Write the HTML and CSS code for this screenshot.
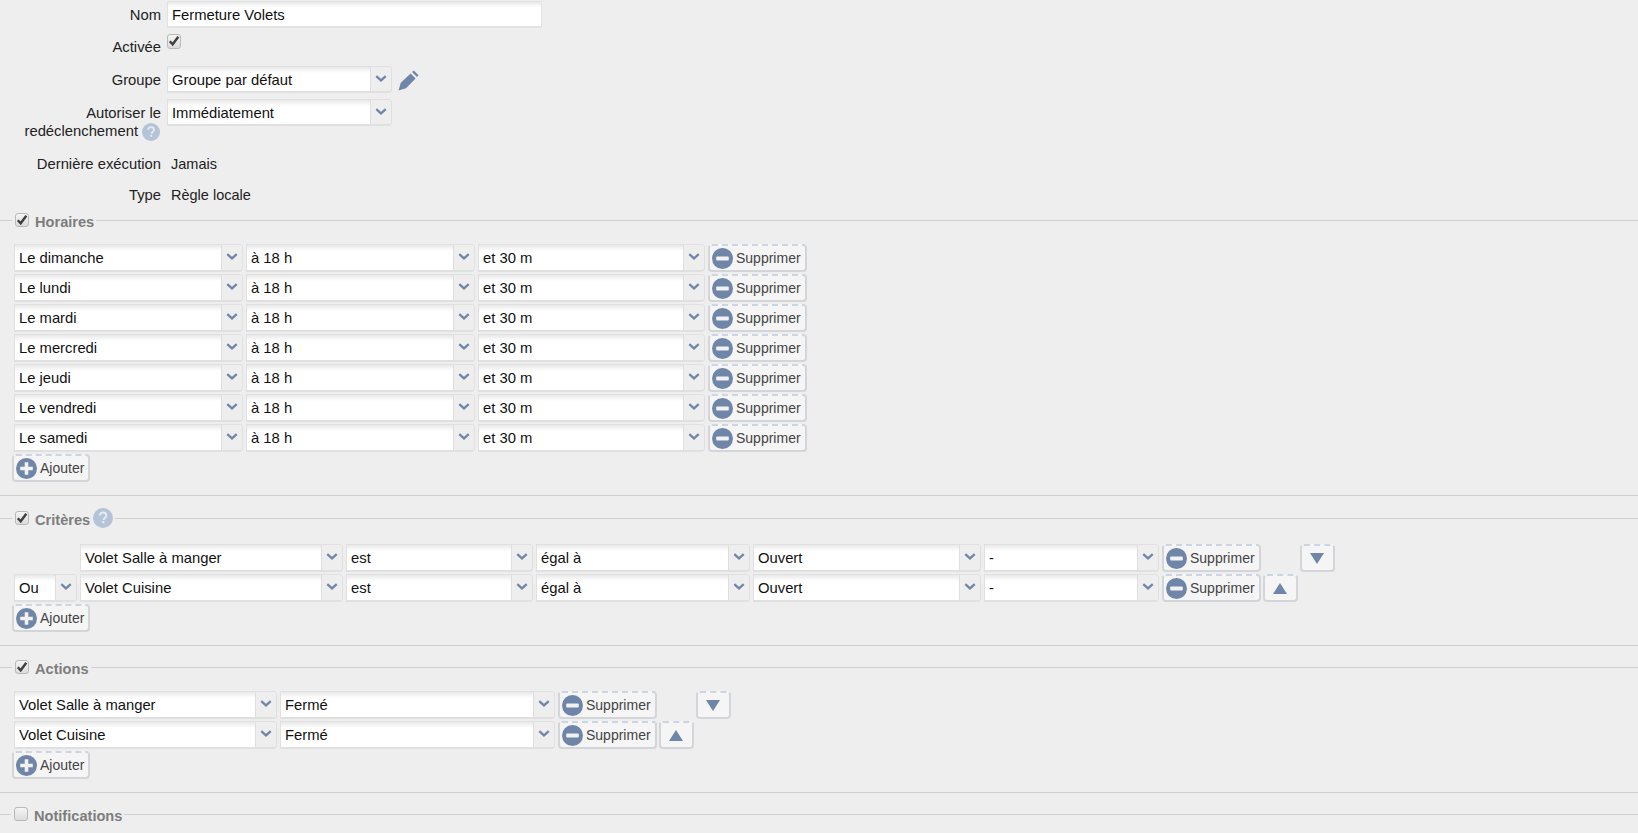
FILE: index.html
```html
<!DOCTYPE html>
<html lang="fr">
<head>
<meta charset="utf-8">
<title>Fermeture Volets</title>
<link rel="stylesheet" href="styles.css">
</head>
<body>
<svg class="defs" width="0" height="0" aria-hidden="true">
  <defs>
    <symbol id="chev" viewBox="0 0 14 8"><path d="M1.5 1.2 7 6.2 12.500 1.200" fill="none" stroke="currentColor" stroke-width="2.6"/></symbol>
    <symbol id="minus" viewBox="0 0 20 20"><circle cx="10" cy="10" r="10" fill="currentColor"/><rect x="4" y="8" width="12" height="4" rx="1" fill="#f2f2f2"/></symbol>
    <symbol id="plus" viewBox="0 0 20 20"><circle cx="10" cy="10" r="10" fill="currentColor"/><path d="M8.300 4h3.400v4.300H16v3.400h-4.300V16H8.300v-4.300H4V8.300h4.300z" fill="#f2f2f2"/></symbol>
    <symbol id="tick" viewBox="0 0 14 14"><path d="M2.800 7.200 5.700 10.300 11.300 2.800" fill="none" stroke="#3f3f3f" stroke-width="2.400"/></symbol>
    <symbol id="help" viewBox="0 0 20 20"><circle cx="10" cy="10" r="10" fill="currentColor"/><path d="M6.800 7.500C7 5.400 8.400 4.600 10.100 4.600c1.900 0 3.200 1.100 3.200 2.800 0 2.500-2.700 2.500-2.700 4.500" fill="none" stroke="#e6eaf0" stroke-width="2"/><rect x="9.100" y="13" width="2.300" height="2.300" fill="#e6eaf0"/></symbol>
    <symbol id="pencil" viewBox="0 0 21 21"><path d="M0.500 20.500 2.800 12.800 12.600 3.400 17.600 8.400 8 18.200Z M14 2 15.800 0.500 20.500 5.200 19 7Z" fill="currentColor"/></symbol>
    <symbol id="up" viewBox="0 0 14 11"><path d="M7 0 14 11H0Z" fill="currentColor"/></symbol>
    <symbol id="down" viewBox="0 0 14 11"><path d="M0 0H14L7 11Z" fill="currentColor"/></symbol>
  </defs>
</svg>

<form class="page">
  <div class="form-row row-nom">
    <label class="lbl lbl-tall">Nom</label>
    <input class="text-input" type="text" value="Fermeture Volets">
  </div>
  <div class="form-row row-active">
    <label class="lbl lbl-active">Activée</label>
    <span class="check check-form"><svg class="tick"><use href="#tick"/></svg></span>
  </div>
  <div class="form-row row-groupe">
    <label class="lbl lbl-tall">Groupe</label>
    <div class="select w-form"><span class="val">Groupe par défaut</span><span class="arrow"><svg class="chev"><use href="#chev"/></svg></span></div>
    <svg class="pencil"><use href="#pencil"/></svg>
  </div>
  <div class="form-row row-auto">
    <label class="lbl lbl-two">Autoriser le<br><span class="lbl-line">redéclenchement <svg class="help help-lbl"><use href="#help"/></svg></span></label>
    <div class="select w-form"><span class="val">Immédiatement</span><span class="arrow"><svg class="chev"><use href="#chev"/></svg></span></div>
  </div>
  <div class="form-row row-last">
    <label class="lbl">Dernière exécution</label>
    <span class="static">Jamais</span>
  </div>
  <div class="form-row row-type">
    <label class="lbl">Type</label>
    <span class="static">Règle locale</span>
  </div>

  <fieldset class="group group-first">
    <legend class="legend"><span class="check"><svg class="tick"><use href="#tick"/></svg></span><span class="legend-text">Horaires</span></legend>
    <div class="rows">
      <div class="row"><div class="select w-day"><span class="val">Le dimanche</span><span class="arrow"><svg class="chev"><use href="#chev"/></svg></span></div><div class="select w-day"><span class="val">à 18 h</span><span class="arrow"><svg class="chev"><use href="#chev"/></svg></span></div><div class="select w-min"><span class="val">et 30 m</span><span class="arrow"><svg class="chev"><use href="#chev"/></svg></span></div><button type="button" class="btn"><svg class="ico"><use href="#minus"/></svg>Supprimer</button></div>
      <div class="row"><div class="select w-day"><span class="val">Le lundi</span><span class="arrow"><svg class="chev"><use href="#chev"/></svg></span></div><div class="select w-day"><span class="val">à 18 h</span><span class="arrow"><svg class="chev"><use href="#chev"/></svg></span></div><div class="select w-min"><span class="val">et 30 m</span><span class="arrow"><svg class="chev"><use href="#chev"/></svg></span></div><button type="button" class="btn"><svg class="ico"><use href="#minus"/></svg>Supprimer</button></div>
      <div class="row"><div class="select w-day"><span class="val">Le mardi</span><span class="arrow"><svg class="chev"><use href="#chev"/></svg></span></div><div class="select w-day"><span class="val">à 18 h</span><span class="arrow"><svg class="chev"><use href="#chev"/></svg></span></div><div class="select w-min"><span class="val">et 30 m</span><span class="arrow"><svg class="chev"><use href="#chev"/></svg></span></div><button type="button" class="btn"><svg class="ico"><use href="#minus"/></svg>Supprimer</button></div>
      <div class="row"><div class="select w-day"><span class="val">Le mercredi</span><span class="arrow"><svg class="chev"><use href="#chev"/></svg></span></div><div class="select w-day"><span class="val">à 18 h</span><span class="arrow"><svg class="chev"><use href="#chev"/></svg></span></div><div class="select w-min"><span class="val">et 30 m</span><span class="arrow"><svg class="chev"><use href="#chev"/></svg></span></div><button type="button" class="btn"><svg class="ico"><use href="#minus"/></svg>Supprimer</button></div>
      <div class="row"><div class="select w-day"><span class="val">Le jeudi</span><span class="arrow"><svg class="chev"><use href="#chev"/></svg></span></div><div class="select w-day"><span class="val">à 18 h</span><span class="arrow"><svg class="chev"><use href="#chev"/></svg></span></div><div class="select w-min"><span class="val">et 30 m</span><span class="arrow"><svg class="chev"><use href="#chev"/></svg></span></div><button type="button" class="btn"><svg class="ico"><use href="#minus"/></svg>Supprimer</button></div>
      <div class="row"><div class="select w-day"><span class="val">Le vendredi</span><span class="arrow"><svg class="chev"><use href="#chev"/></svg></span></div><div class="select w-day"><span class="val">à 18 h</span><span class="arrow"><svg class="chev"><use href="#chev"/></svg></span></div><div class="select w-min"><span class="val">et 30 m</span><span class="arrow"><svg class="chev"><use href="#chev"/></svg></span></div><button type="button" class="btn"><svg class="ico"><use href="#minus"/></svg>Supprimer</button></div>
      <div class="row"><div class="select w-day"><span class="val">Le samedi</span><span class="arrow"><svg class="chev"><use href="#chev"/></svg></span></div><div class="select w-day"><span class="val">à 18 h</span><span class="arrow"><svg class="chev"><use href="#chev"/></svg></span></div><div class="select w-min"><span class="val">et 30 m</span><span class="arrow"><svg class="chev"><use href="#chev"/></svg></span></div><button type="button" class="btn"><svg class="ico"><use href="#minus"/></svg>Supprimer</button></div>
      <button type="button" class="btn btn-add"><svg class="ico"><use href="#plus"/></svg>Ajouter</button>
    </div>
  </fieldset>

  <fieldset class="group group-tall">
    <legend class="legend"><span class="check"><svg class="tick"><use href="#tick"/></svg></span><span class="legend-text">Critères</span><svg class="help help-legend"><use href="#help"/></svg></legend>
    <div class="rows">
      <div class="row">
        <div class="ou-spacer"></div>
        <div class="select w-c1"><span class="val">Volet Salle à manger</span><span class="arrow"><svg class="chev"><use href="#chev"/></svg></span></div>
        <div class="select w-c2"><span class="val">est</span><span class="arrow"><svg class="chev"><use href="#chev"/></svg></span></div>
        <div class="select w-c3"><span class="val">égal à</span><span class="arrow"><svg class="chev"><use href="#chev"/></svg></span></div>
        <div class="select w-c4"><span class="val">Ouvert</span><span class="arrow"><svg class="chev"><use href="#chev"/></svg></span></div>
        <div class="select w-c5"><span class="val">-</span><span class="arrow"><svg class="chev"><use href="#chev"/></svg></span></div>
        <button type="button" class="btn"><svg class="ico"><use href="#minus"/></svg>Supprimer</button>
        <div class="move-spacer"></div>
        <button type="button" class="btn btn-move"><svg class="tri"><use href="#down"/></svg></button>
      </div>
      <div class="row">
        <div class="select w-ou"><span class="val">Ou</span><span class="arrow"><svg class="chev"><use href="#chev"/></svg></span></div>
        <div class="select w-c1"><span class="val">Volet Cuisine</span><span class="arrow"><svg class="chev"><use href="#chev"/></svg></span></div>
        <div class="select w-c2"><span class="val">est</span><span class="arrow"><svg class="chev"><use href="#chev"/></svg></span></div>
        <div class="select w-c3"><span class="val">égal à</span><span class="arrow"><svg class="chev"><use href="#chev"/></svg></span></div>
        <div class="select w-c4"><span class="val">Ouvert</span><span class="arrow"><svg class="chev"><use href="#chev"/></svg></span></div>
        <div class="select w-c5"><span class="val">-</span><span class="arrow"><svg class="chev"><use href="#chev"/></svg></span></div>
        <button type="button" class="btn"><svg class="ico"><use href="#minus"/></svg>Supprimer</button>
        <button type="button" class="btn btn-move"><svg class="tri"><use href="#up"/></svg></button>
      </div>
      <button type="button" class="btn btn-add"><svg class="ico"><use href="#plus"/></svg>Ajouter</button>
    </div>
  </fieldset>

  <fieldset class="group">
    <legend class="legend"><span class="check"><svg class="tick"><use href="#tick"/></svg></span><span class="legend-text">Actions</span></legend>
    <div class="rows">
      <div class="row">
        <div class="select w-a1"><span class="val">Volet Salle à manger</span><span class="arrow"><svg class="chev"><use href="#chev"/></svg></span></div>
        <div class="select w-a2"><span class="val">Fermé</span><span class="arrow"><svg class="chev"><use href="#chev"/></svg></span></div>
        <button type="button" class="btn"><svg class="ico"><use href="#minus"/></svg>Supprimer</button>
        <div class="move-spacer"></div>
        <button type="button" class="btn btn-move"><svg class="tri"><use href="#down"/></svg></button>
      </div>
      <div class="row">
        <div class="select w-a1"><span class="val">Volet Cuisine</span><span class="arrow"><svg class="chev"><use href="#chev"/></svg></span></div>
        <div class="select w-a2"><span class="val">Fermé</span><span class="arrow"><svg class="chev"><use href="#chev"/></svg></span></div>
        <button type="button" class="btn"><svg class="ico"><use href="#minus"/></svg>Supprimer</button>
        <button type="button" class="btn btn-move"><svg class="tri"><use href="#up"/></svg></button>
      </div>
      <button type="button" class="btn btn-add"><svg class="ico"><use href="#plus"/></svg>Ajouter</button>
    </div>
  </fieldset>

  <fieldset class="group group-closed">
    <legend class="legend"><span class="check"></span><span class="legend-text">Notifications</span></legend>
  </fieldset>
</form>
</body>
</html>
```

FILE: styles.css
```css
* { box-sizing: border-box; }
html, body { margin: 0; height: 833px; overflow: hidden; }
body {
  background: #eeeeee;
  color: #1c1c1c;
  font: 14.8px/18px "Liberation Sans", Arial, sans-serif;
}
.defs { position: absolute; }
.page { display: block; }

.form-row { display: flex; align-items: flex-start; gap: 6px; }
.row-nom { margin-top: 1px; height: 27px; }
.row-active { margin-top: 6px; height: 26px; }
.row-groupe { margin-top: 6px; height: 27px; }
.row-auto { margin-top: 6px; height: 47px; }
.row-last { margin-top: 9px; height: 18px; }
.row-type { margin-top: 13px; height: 18px; }

.lbl { width: 161px; flex: none; text-align: right; color: #222; }
.lbl-tall { line-height: 28px; }
.lbl-active { padding-top: 4px; }
.lbl-two { padding-top: 5px; }
.lbl-line { display: inline-flex; align-items: flex-start; gap: 4px; padding-right: 1px; }
.static { margin-left: 4px; color: #222; font-size: 14.5px; }

.text-input {
  width: 375px; height: 27px;
  padding: 2px 4px 0;
  border: 1px solid #e2e2e2;
  border-bottom-width: 2px;
  background: linear-gradient(#e8e8e8, #ffffff 5px);
  font: inherit; color: #111;
  outline: none;
}

.check {
  display: inline-block; flex: none;
  width: 14px; height: 14px;
  border: 1px solid #b9b9b9; border-radius: 3px;
  background: linear-gradient(#f4f4f4, #dcdcdc);
}
.check-form { width: 14px; height: 15px; }
.tick { display: block; width: 14px; height: 14px; margin: -1px; }

.select {
  display: flex; flex: none; height: 28px;
  border: 1px solid #e0e0e0;
  border-bottom-width: 2px;
  border-radius: 0 4px 4px 0;
  overflow: hidden;
}
.row-groupe .select, .row-auto .select { height: 27px; }
.val {
  flex: 1 1 auto; min-width: 0;
  padding: 2px 4px 0 4px;
  line-height: 22px;
  background: linear-gradient(#e8e8e8, #ffffff 6px);
  color: #111;
  white-space: nowrap;
}
.arrow {
  flex: none; width: 21px;
  display: flex; align-items: flex-start; justify-content: center;
  padding-top: 8px;
  border-left: 1px solid #dedede;
  background: #eeeeee;
  color: #6f86a8;
}
.chev { display: block; width: 12px; height: 7px; }

.w-form { width: 225px; }
.w-day { width: 229px; }
.w-min { width: 227px; }
.w-ou { width: 63px; }
.w-c1 { width: 263px; }
.w-c2 { width: 187px; }
.w-c3 { width: 214px; }
.w-c4 { width: 228px; }
.w-c5 { width: 175px; }
.w-a1 { width: 263px; }
.w-a2 { width: 275px; }
.ou-spacer { width: 63px; flex: none; }
.move-spacer { width: 34px; flex: none; }

.pencil { width: 21px; height: 21px; margin: 4px 0 0 0; color: #6f86a8; }
.help { display: block; color: #b4c3d8; flex: none; }
.help-lbl { width: 18px; height: 18px; margin-top: 1px; }
.help-legend { width: 20px; height: 20px; margin-left: -3px; }

.group {
  margin: 13px 0 0;
  padding: 16px 0 13px 14px;
  border: 0;
  border-top: 1px solid #cfcfcf;
  border-bottom: 1px solid #cfcfcf;
  min-width: 0;
}
.group-first { margin-top: 8px; }
.group-tall { margin-top: 12px; }
.group-closed { padding-bottom: 60px; }
.group-closed .legend { margin-left: -3px; }
.legend {
  display: flex; align-items: center; gap: 6px;
  height: 16px;
  margin-left: -2px;
  padding: 0 2px 0 3px;
}
.group-tall .legend { height: 20px; }
.legend-text { font-weight: bold; font-size: 14.6px; color: #7d7d7d; margin-top: 4px; }

.rows { display: flex; flex-direction: column; gap: 2px; align-items: flex-start; }
.row { display: flex; gap: 3px; }

.btn {
  display: inline-flex; align-items: center; gap: 3px; flex: none;
  height: 28px;
  padding: 0 4px 0 2px;
  border: 2px solid #d3d5d9;
  border-top: 2px dashed #cdd5e2;
  border-radius: 4px;
  background: #f5f5f6;
  color: #444;
  font: 14px/18px "Liberation Sans", Arial, sans-serif;
}
.ico { display: block; width: 21px; height: 21px; color: #6f86a8; flex: none; }
.btn-add { margin-left: -2px; }
.btn-move { width: 35px; margin-left: -1px; justify-content: center; padding: 0; }
.tri { display: block; width: 14px; height: 11px; color: #6f86a8; }
```
